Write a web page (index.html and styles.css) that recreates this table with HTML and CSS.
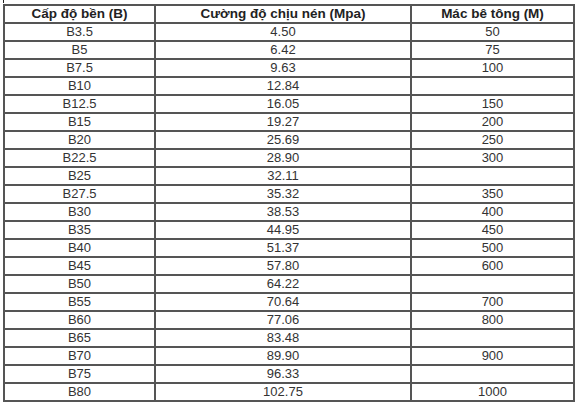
FILE: index.html
```html
<!DOCTYPE html>
<html>
<head>
<meta charset="utf-8">
<link rel="stylesheet" href="styles.css">
</head>
<body>
<div class="mark"></div>
<table class="grade">
<colgroup><col class="c1"><col class="c2"><col class="c3"></colgroup>
<thead>
<tr><th>Cấp độ bền (B)</th><th>Cường độ chịu nén (Mpa)</th><th>Mác bê tông (M)</th></tr>
</thead>
<tbody>
<tr><td>B3.5</td><td>4.50</td><td>50</td></tr>
<tr><td>B5</td><td>6.42</td><td>75</td></tr>
<tr><td>B7.5</td><td>9.63</td><td>100</td></tr>
<tr><td>B10</td><td>12.84</td><td></td></tr>
<tr><td>B12.5</td><td>16.05</td><td>150</td></tr>
<tr><td>B15</td><td>19.27</td><td>200</td></tr>
<tr><td>B20</td><td>25.69</td><td>250</td></tr>
<tr><td>B22.5</td><td>28.90</td><td>300</td></tr>
<tr><td>B25</td><td>32.11</td><td></td></tr>
<tr><td>B27.5</td><td>35.32</td><td>350</td></tr>
<tr><td>B30</td><td>38.53</td><td>400</td></tr>
<tr><td>B35</td><td>44.95</td><td>450</td></tr>
<tr><td>B40</td><td>51.37</td><td>500</td></tr>
<tr><td>B45</td><td>57.80</td><td>600</td></tr>
<tr><td>B50</td><td>64.22</td><td></td></tr>
<tr><td>B55</td><td>70.64</td><td>700</td></tr>
<tr><td>B60</td><td>77.06</td><td>800</td></tr>
<tr><td>B65</td><td>83.48</td><td></td></tr>
<tr><td>B70</td><td>89.90</td><td>900</td></tr>
<tr><td>B75</td><td>96.33</td><td></td></tr>
<tr><td>B80</td><td>102.75</td><td>1000</td></tr>
</tbody>
</table>
</body>
</html>
```
FILE: styles.css
```css
html, body {
  margin: 0;
  padding: 0;
  background: #fff;
}
body {
  padding: 4px 0 0 3px;
  position: relative;
  font-family: "Liberation Sans", Arial, sans-serif;
  color: #333;
}
.mark {
  position: absolute;
  left: 3px;
  top: 0;
  width: 1px;
  height: 3px;
  background: #222;
}
.grade {
  border-collapse: collapse;
  table-layout: fixed;
  width: 572px;
  font-size: 13px;
}
.c1 { width: 151px; }
.c2 { width: 256px; }
.c3 { width: 163px; }
.grade th,
.grade td {
  border: 2px solid #555;
  padding: 0;
  height: 16px;
  line-height: 16px;
  text-align: center;
  white-space: nowrap;
}
.grade th {
  font-weight: bold;
  font-size: 13.5px;
  color: #222;
}
```
